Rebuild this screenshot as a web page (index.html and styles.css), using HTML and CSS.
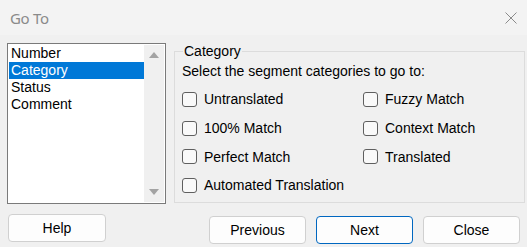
FILE: index.html
```html
<!DOCTYPE html>
<html lang="en">
<head>
  <meta charset="UTF-8">
  <meta name="viewport" content="width=device-width, initial-scale=1.0">
  <title>Go To</title>
  <link rel="stylesheet" href="styles.css">
</head>
<body>
  <div class="window">
    <div class="title-bar">
      <span class="title">Go To</span>
      <svg class="close" width="12" height="12" viewBox="0 0 12 12">
        <path d="M0.5 0.5 L11.5 11.5 M11.5 0.5 L0.5 11.5" stroke="#8a8a8a" stroke-width="1" fill="none"/>
      </svg>
    </div>

    <div class="content">
      <div class="left-col">
        <div class="listbox">
          <ul class="items">
            <li>Number</li>
            <li class="selected">Category</li>
            <li>Status</li>
            <li>Comment</li>
          </ul>
          <div class="scrollbar">
            <span class="arrow up"></span>
            <span class="arrow down"></span>
          </div>
        </div>
        <button class="btn help">Help</button>
      </div>

      <div class="right-col">
        <fieldset class="group">
          <legend>Category</legend>
          <p class="hint">Select the segment categories to go to:</p>
          <div class="options">
            <label class="option"><span class="box"></span>Untranslated</label>
            <label class="option"><span class="box"></span>Fuzzy Match</label>
            <label class="option"><span class="box"></span>100% Match</label>
            <label class="option"><span class="box"></span>Context Match</label>
            <label class="option"><span class="box"></span>Perfect Match</label>
            <label class="option"><span class="box"></span>Translated</label>
            <label class="option"><span class="box"></span>Automated Translation</label>
          </div>
        </fieldset>
        <div class="buttons">
          <button class="btn">Previous</button>
          <button class="btn primary">Next</button>
          <button class="btn">Close</button>
        </div>
      </div>
    </div>
  </div>
</body>
</html>
```

FILE: styles.css
```css
* {
  box-sizing: border-box;
}

body {
  margin: 0;
  width: 527px;
  height: 247px;
  overflow: hidden;
  background-color: #f0f0f0;
  font-family: "Liberation Sans", Arial, sans-serif;
  font-size: 14px;
  color: #000;
}

.window {
  display: flex;
  flex-direction: column;
  height: 100%;
}

/* Title bar */
.title-bar {
  height: 35px;
  flex: none;
  display: flex;
  align-items: center;
  justify-content: space-between;
  padding: 0 10px 0 10px;
  background-color: #f3f3f3;
}

.title {
  font-family: "Noto Sans", sans-serif;
  font-size: 15px;
  color: #8a8a8a;
  letter-spacing: -0.3px;
}

.content {
  display: flex;
  padding: 8px 0 0 7px;
  gap: 8px;
}

.left-col {
  display: flex;
  flex-direction: column;
  gap: 10px;
}

/* List box */
.listbox {
  width: 159px;
  height: 161px;
  display: flex;
  border: 1px solid #7a7a7a;
  background-color: #fff;
  padding: 1px;
}

.items {
  list-style: none;
  margin: 0;
  padding: 0;
  flex: 1;
}

.items li {
  height: 17px;
  line-height: 17px;
  padding-left: 2px;
}

.items li.selected {
  background-color: #0078d7;
  color: #fff;
}

.scrollbar {
  width: 20px;
  background-color: #f0f0f0;
  display: flex;
  flex-direction: column;
  justify-content: space-between;
  align-items: center;
  padding: 7px 0 7px 0;
}

.arrow {
  width: 0;
  height: 0;
  border-left: 5px solid transparent;
  border-right: 5px solid transparent;
}

.arrow.up {
  border-bottom: 6px solid #a3a3a3;
}

.arrow.down {
  border-top: 6px solid #a3a3a3;
}

/* Group box */
.right-col {
  display: flex;
  flex-direction: column;
  gap: 13px;
}

.group {
  width: 351px;
  height: 160px;
  margin: 0;
  padding: 0 0 0 7px;
  border: 1px solid #dcdcdc;
}

.group legend {
  padding: 0 1px;
  margin-left: 1px;
  line-height: 16px;
}

.hint {
  margin: 4px 0 0 0;
  line-height: 16px;
}

.options {
  display: grid;
  grid-template-columns: 181px 1fr;
  grid-auto-rows: 28.7px;
  margin-top: 6px;
}

.option {
  display: flex;
  align-items: center;
  gap: 7px;
}

.box {
  width: 15px;
  height: 15px;
  border: 1px solid #5f5f5f;
  border-radius: 3px;
  background-color: #f9f9f9;
}

/* Buttons */
.btn {
  width: 97px;
  height: 28px;
  font-family: "Liberation Sans", Arial, sans-serif;
  font-size: 14px;
  color: #000;
  background-color: #fdfdfd;
  border: 1px solid #d0d0d0;
  border-radius: 4px;
  padding: 0;
}

.help {
  width: 98px;
  margin-left: 1px;
}

.buttons {
  display: flex;
  gap: 10px;
  padding-left: 35px;
}

.primary {
  border-color: #0067c0;
}
```
